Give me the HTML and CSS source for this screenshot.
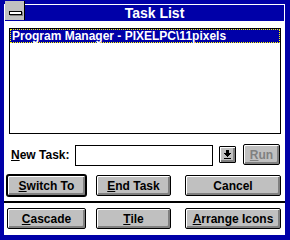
FILE: index.html
```html
<!DOCTYPE html>
<html lang="en">
<head>
  <meta charset="UTF-8" />
  <title>Task List</title>
  <link rel="stylesheet" href="styles.css">
</head>
<body>
  <div class="window">
    <!-- TITLE BAR -->
    <div class="titlebar">
      <div class="sysmenu"><span class="sysbar"></span></div>
      <div class="title">Task List</div>
    </div>

    <!-- CLIENT AREA -->
    <div class="client">
      <div class="listbox">
        <div class="item selected">Program Manager - PIXELPC\11pixels</div>
      </div>

      <div class="taskrow">
        <label class="label" for="newtask"><u>N</u>ew Task:</label>
        <input class="combo" id="newtask" type="text">
        <button class="btn dropbtn">
          <svg width="7" height="9" viewBox="0 0 7 9" shape-rendering="crispEdges">
            <path d="M2 0h3v3h2v1h-1v1h-1v1h-1v1h-1v-1h-1v-1h-1v-1h-1v-1h2z M0 8h7v1h-7z" fill="#000"/>
          </svg>
        </button>
        <button class="btn run" disabled><u>R</u>un</button>
      </div>

      <div class="btnrow">
        <button class="btn default w1"><u>S</u>witch To</button>
        <button class="btn w2"><u>E</u>nd Task</button>
        <button class="btn w3">Cancel</button>
      </div>

      <div class="sep"></div>

      <div class="btnrow second">
        <button class="btn w1"><u>C</u>ascade</button>
        <button class="btn w2"><u>T</u>ile</button>
        <button class="btn w3"><u>A</u>rrange Icons</button>
      </div>
    </div>
  </div>
</body>
</html>
```

FILE: styles.css
```css
body {
  margin: 0;
  background-color: #0000a8;
  font-family: "Liberation Sans", Arial, sans-serif;
}

.window {
  width: 290px;
  height: 240px;
  box-sizing: border-box;
  background-color: #0000a8;
  padding: 4px 5px 5px 4px;
  display: flex;
  flex-direction: column;
}

/* title bar */
.titlebar {
  height: 17px;
  display: flex;
  flex: none;
  border-top: 1px solid #fff;
  border-left: 1px solid #fff;
  border-right: 1px solid #fff;
  box-sizing: border-box;
}

.sysmenu {
  width: 20px;
  height: 19px;
  margin-top: -4px;
  background-color: #c0c0c0;
  border-right: 1px solid #000;
  padding: 10px 0 0 4px;
  box-sizing: border-box;
  display: flex;
  align-items: flex-start;
}

.sysbar {
  display: block;
  width: 11px;
  height: 2px;
  border: 1px solid #000;
  background-color: #fff;
  box-shadow: 1px 1px 0 #808080;
}

.title {
  flex: 1;
  color: #fff;
  font-weight: bold;
  font-size: 14px;
  line-height: 16px;
  text-align: center;
}

/* client */
.client {
  flex: 1;
  background-color: #fff;
  display: flex;
  flex-direction: column;
  padding-top: 7px;
}

.listbox {
  margin: 0 4px 0 5px;
  height: 106px;
  border: 1px solid #000;
  box-sizing: border-box;
  flex: none;
}

.item {
  height: 14px;
  line-height: 12px;
  font-size: 12px;
  font-weight: bold;
  padding-left: 1px;
  box-sizing: border-box;
  white-space: nowrap;
}

.item.selected {
  background-color: #0000a8;
  color: #fff;
  border: 1px dotted #ffff00;
}

.taskrow {
  display: flex;
  align-items: flex-start;
  height: 21px;
  margin-top: 10px;
  padding-left: 7px;
  flex: none;
}

.label {
  width: 64px;
  margin-top: 4px;
  font-size: 12px;
  font-weight: bold;
  line-height: 14px;
}

.combo {
  width: 138px;
  height: 21px;
  margin: 1px 0 0 0;
  padding: 0;
  border: 1px solid #000;
  box-sizing: border-box;
  outline: none;
}

/* buttons */
.btn {
  height: 21px;
  padding: 0;
  margin: 0;
  border: 1px solid #000;
  border-radius: 2px;
  box-sizing: border-box;
  background-color: #c0c0c0;
  box-shadow: inset 1px 1px 0 #fff, inset -2px -2px 0 #808080;
  font-family: "Liberation Sans", Arial, sans-serif;
  font-size: 12px;
  font-weight: bold;
  color: #000;
  line-height: 14px;
}

.dropbtn {
  width: 17px;
  height: 17px;
  margin: 2px 0 0 6px;
  border-radius: 1px;
  display: flex;
  align-items: center;
  justify-content: center;
}

.run {
  width: 37px;
  margin-left: 7px;
  color: #808080;
}

.btnrow {
  display: flex;
  margin-top: 10px;
  padding-left: 3px;
  flex: none;
}

.btnrow.second {
  margin-top: 5px;
}

.default {
  box-shadow: 0 0 0 1px #000, inset 1px 1px 0 #fff, inset -2px -2px 0 #808080;
}

.w1 {
  width: 79px;
}

.w2 {
  width: 75px;
  margin-left: 10px;
}

.w3 {
  width: 96px;
  margin-left: 14px;
}

.sep {
  height: 2px;
  background-color: #000;
  margin-top: 5px;
  flex: none;
}
```
